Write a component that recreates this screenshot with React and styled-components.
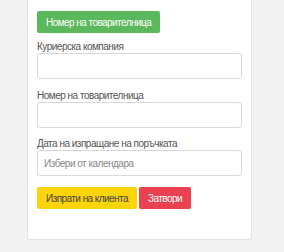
import React from "react";
import styled, { createGlobalStyle } from "styled-components";

const GlobalStyle = createGlobalStyle`
  body {
    margin: 0;
    background: #f2f2f2;
    font-family: "Liberation Sans", Arial, sans-serif;
  }
`;

const Page = styled.div`
  padding-left: 27px;
`;

const Card = styled.div`
  width: 225px;
  box-sizing: border-box;
  background: #fff;
  border: 1px solid #e2e2e2;
  border-top: none;
  border-radius: 0 0 3px 3px;
  padding: 11px 9px 30px;
`;

const Button = styled.button`
  height: 22px;
  padding: 0 9px;
  border: none;
  border-radius: 2px;
  font-family: inherit;
  font-size: 10px;
  letter-spacing: -0.55px;
  color: ${(p) => p.$text};
  background: ${(p) => p.$bg};
  cursor: pointer;
`;

const Group = styled.div`
  margin-top: ${(p) => p.$gap}px;
`;

const Label = styled.label`
  display: block;
  font-size: 10px;
  letter-spacing: -0.5px;
  line-height: 13px;
  color: #555;
`;

const Input = styled.input`
  display: block;
  width: 100%;
  height: 26px;
  box-sizing: border-box;
  border: 1px solid #d8d8d8;
  border-radius: 3px;
  padding: 0 6px;
  font-family: inherit;
  font-size: 10px;
  letter-spacing: -0.5px;
  color: #333;
  &::placeholder {
    color: #888;
  }
`;

const Actions = styled.div`
  display: flex;
  gap: 2px;
  margin-top: 11px;
`;

const fields = [
  { label: "Куриерска компания", gap: 7 },
  { label: "Номер на товарителница", gap: 10 },
  { label: "Дата на изпращане на поръчката", gap: 9, placeholder: "Избери от календара" },
];

const App = () => (
  <Page>
    <GlobalStyle />
    <Card>
      <Button $bg="#5cb85c" $text="#fff">Номер на товарителница</Button>
      {fields.map((f) => (
        <Group key={f.label} $gap={f.gap}>
          <Label>{f.label}</Label>
          <Input placeholder={f.placeholder} />
        </Group>
      ))}
      <Actions>
        <Button $bg="#fdd40a" $text="#444">Изпрати на клиента</Button>
        <Button $bg="#e9414f" $text="#fff">Затвори</Button>
      </Actions>
    </Card>
  </Page>
);

export default App;
